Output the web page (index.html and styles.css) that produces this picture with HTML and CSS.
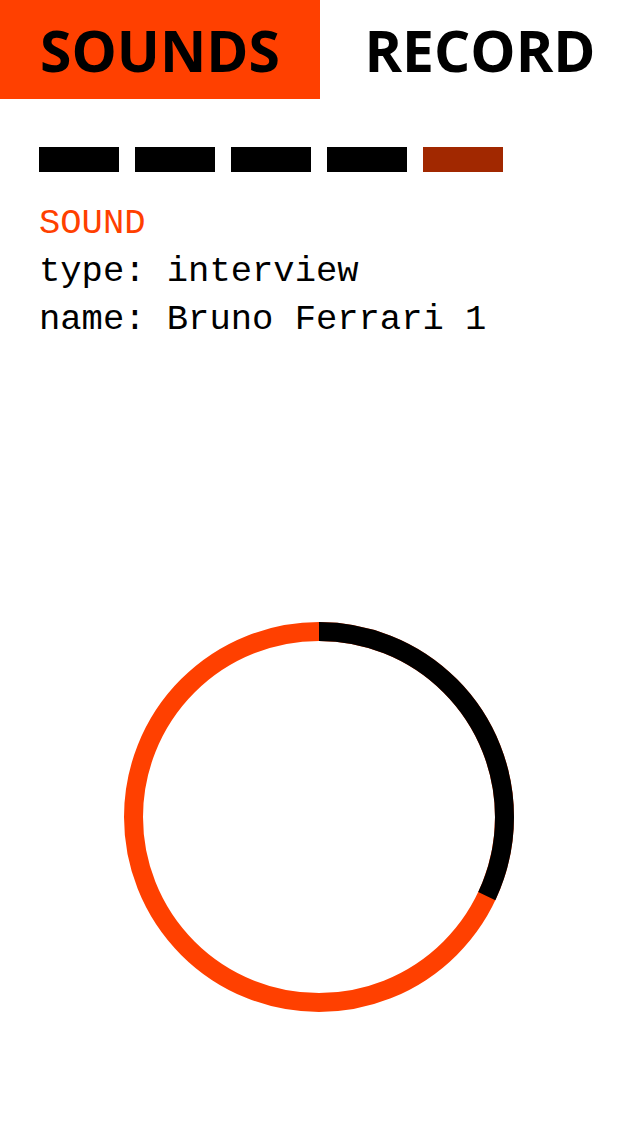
FILE: index.html
```html
<!DOCTYPE html>
<html lang="en">
<head>
    <meta charset="UTF-8">
    <meta name="viewport" content="width=device-width, initial-scale=1.0">
    <title>Sounds</title>
    <link rel="stylesheet" href="styles.css">
</head>
<body>
    <nav class="tabs">
        <a class="tab active" href="#">SOUNDS</a>
        <a class="tab" href="#">RECORD</a>
    </nav>

    <div class="content">
        <div class="pager">
            <span class="dot"></span>
            <span class="dot"></span>
            <span class="dot"></span>
            <span class="dot"></span>
            <span class="dot current"></span>
        </div>

        <div class="info">
            <div class="info-title">SOUND</div>
            <div>type: interview</div>
            <div>name: Bruno Ferrari 1</div>
        </div>
    </div>

    <div class="player">
        <svg class="progress" width="390" height="390" viewBox="0 0 390 390">
            <circle cx="195" cy="195" r="185.5" fill="none" stroke="#ff4000" stroke-width="19"/>
            <!-- played part, 32% -->
            <circle cx="195" cy="195" r="185.5" fill="none" stroke="#000" stroke-width="19"
                    stroke-dasharray="373 1200" transform="rotate(-90 195 195)"/>
        </svg>
    </div>
</body>
</html>
```

FILE: styles.css
```css
body {
    margin: 0;
    padding: 0;
    background: #fff;
    font-family: "Liberation Mono", monospace;
}
.tabs {
    display: flex;
    height: 99px;
}
.tab {
    flex: 1;
    display: flex;
    align-items: center;
    justify-content: center;
    font-family: "Open Sans", sans-serif;
    font-weight: bold;
    font-size: 57px;
    color: #000;
    text-decoration: none;
}
.tab.active {
    background-color: #ff4000;
}
.content {
    padding: 0 40px 0 39px;
}
.pager {
    display: flex;
    gap: 16px;
    margin-top: 48px;
}
.dot {
    width: 80px;
    height: 25px;
    background-color: #000;
}
.dot.current {
    background-color: #a12800;
}
.info {
    margin-top: 28px;
    font-size: 35.5px;
    line-height: 48px;
    color: #000;
}
.info-title {
    color: #ff4000;
}
.player {
    display: flex;
    justify-content: center;
    margin-top: 278px;
}
.progress {
    display: block;
    margin-left: -2px;
}
```
